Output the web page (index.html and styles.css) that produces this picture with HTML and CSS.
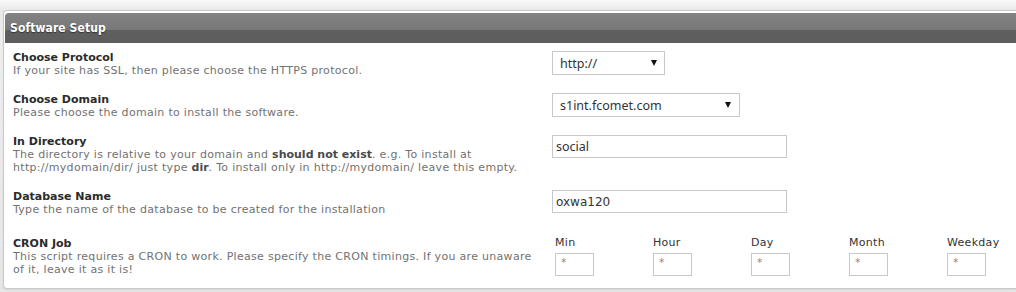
FILE: index.html
```html
<!DOCTYPE html>
<html>
<head>
<meta charset="utf-8">
<link rel="stylesheet" href="styles.css">
</head>
<body>
<div class="page">
  <div class="card">
    <div class="head">Software Setup</div>
    <div class="rows">
      <div class="row">
        <div class="info">
          <div class="label">Choose Protocol</div>
          <div class="desc">If your site has SSL, then please choose the HTTPS protocol.</div>
        </div>
        <div class="field">
          <span class="sel sel-proto"><select><option>http://</option></select></span>
        </div>
      </div>
      <div class="row">
        <div class="info">
          <div class="label">Choose Domain</div>
          <div class="desc">Please choose the domain to install the software.</div>
        </div>
        <div class="field">
          <span class="sel sel-domain"><select><option>s1int.fcomet.com</option></select></span>
        </div>
      </div>
      <div class="row">
        <div class="info">
          <div class="label">In Directory</div>
          <div class="desc">The directory is relative to your domain and <b>should not exist</b>. e.g. To install at http://mydomain/dir/ just type <b>dir</b>. To install only in http://mydomain/ leave this empty.</div>
        </div>
        <div class="field">
          <input class="text text-seg" type="text" value="social">
        </div>
      </div>
      <div class="row">
        <div class="info">
          <div class="label">Database Name</div>
          <div class="desc">Type the name of the database to be created for the installation</div>
        </div>
        <div class="field">
          <input class="text" type="text" value="oxwa120">
        </div>
      </div>
      <div class="row row-cron">
        <div class="info">
          <div class="label">CRON Job</div>
          <div class="desc">This script requires a CRON to work. Please specify the CRON timings. If you are unaware of it, leave it as it is!</div>
        </div>
        <div class="field">
          <div class="cron">
            <div class="cron-col"><div class="cron-label">Min</div><input class="cron-input" type="text" value="*"></div>
            <div class="cron-col"><div class="cron-label">Hour</div><input class="cron-input" type="text" value="*"></div>
            <div class="cron-col"><div class="cron-label">Day</div><input class="cron-input" type="text" value="*"></div>
            <div class="cron-col"><div class="cron-label">Month</div><input class="cron-input" type="text" value="*"></div>
            <div class="cron-col"><div class="cron-label">Weekday</div><input class="cron-input" type="text" value="*"></div>
          </div>
        </div>
      </div>
    </div>
  </div>
</div>
</body>
</html>
```
FILE: styles.css
```css
html, body {
  margin: 0;
  padding: 0;
}
body {
  background: linear-gradient(#fafafa 0, #e9e9e9 10px, #eeeeee 40px, #e6e6e6 100%);
  font-family: "DejaVu Sans", Verdana, sans-serif;
  font-size: 11px;
  color: #333;
  overflow: hidden;
  height: 292px;
}
.page {
  padding: 10px 0 0 3px;
}
.card {
  background: #fff;
  border: 1px solid #c9c9c9;
  border-right: none;
  border-radius: 4px 0 0 4px;
  padding: 2px 0 0 1px;
  box-shadow: 0 1px 2px rgba(0,0,0,0.08);
  height: 279px;
  box-sizing: border-box;
}
.head {
  height: 30px;
  box-sizing: border-box;
  border-radius: 4px 0 0 0;
  background: linear-gradient(#838383 0, #787878 55%, #5f5f5f 56%, #5d5d5d 100%);
  color: #fff;
  font-family: "DejaVu Sans Condensed", "DejaVu Sans", sans-serif;
  font-weight: bold;
  font-size: 12px;
  line-height: 31px;
  padding-left: 5px;
  letter-spacing: 0.1px;
  text-shadow: 0 1px 1px #333;
}
.rows {
  padding: 8px 0 0 8px;
  display: flex;
  flex-direction: column;
  gap: 16px;
}
.row {
  display: grid;
  grid-template-columns: 530px 1fr;
  column-gap: 9px;
  align-items: start;
}
.row-cron {
  margin-top: 5px;
}
.label {
  font-weight: bold;
  color: #2b2b2b;
  line-height: 13px;
}
.desc {
  color: #727272;
  line-height: 13px;
  letter-spacing: 0.3px;
}
.desc b {
  color: #4a4a4a;
  letter-spacing: 0;
}
.sel {
  position: relative;
  display: inline-block;
}
.sel::after {
  content: "";
  position: absolute;
  top: 9px;
  width: 0;
  height: 0;
  border-left: 3px solid transparent;
  border-right: 3px solid transparent;
  border-top: 6px solid #111;
  pointer-events: none;
}
.sel-proto::after { right: 8px; }
.sel-domain::after { right: 9px; }
.sel select {
  -webkit-appearance: none;
  appearance: none;
  display: block;
  height: 24px;
  box-sizing: border-box;
  border: 1px solid #c8c8c8;
  border-radius: 0;
  background: #fff;
  color: #333;
  font-family: "Noto Sans", "Open Sans", sans-serif;
  font-size: 12.5px;
  padding: 0 0 0 7px;
  margin: 0;
}
.sel-proto select { width: 113px; }
.sel-domain select { width: 188px; }
.text {
  display: block;
  width: 235px;
  height: 23px;
  box-sizing: border-box;
  border: 1px solid #c8c8c8;
  padding: 0 0 0 3px;
  margin: 0;
  font-family: "DejaVu Sans", Verdana, sans-serif;
  font-size: 12px;
  color: #333;
  outline: none;
}
.text-seg {
  font-family: "Noto Sans", "Open Sans", sans-serif;
  font-size: 12.5px;
}
.cron {
  display: grid;
  grid-template-columns: repeat(5, 98px);
  padding-left: 3px;
  margin-top: -1px;
}
.cron-label {
  line-height: 13px;
  color: #333;
  letter-spacing: 0.3px;
  margin-bottom: 4px;
}
.cron-input {
  display: block;
  width: 39px;
  height: 23px;
  box-sizing: border-box;
  border: 1px solid #c8c8c8;
  padding: 0 0 5px 5px;
  margin: 0;
  font-family: "DejaVu Sans", Verdana, sans-serif;
  font-size: 11px;
  color: #c07a4a;
  outline: none;
}
```
